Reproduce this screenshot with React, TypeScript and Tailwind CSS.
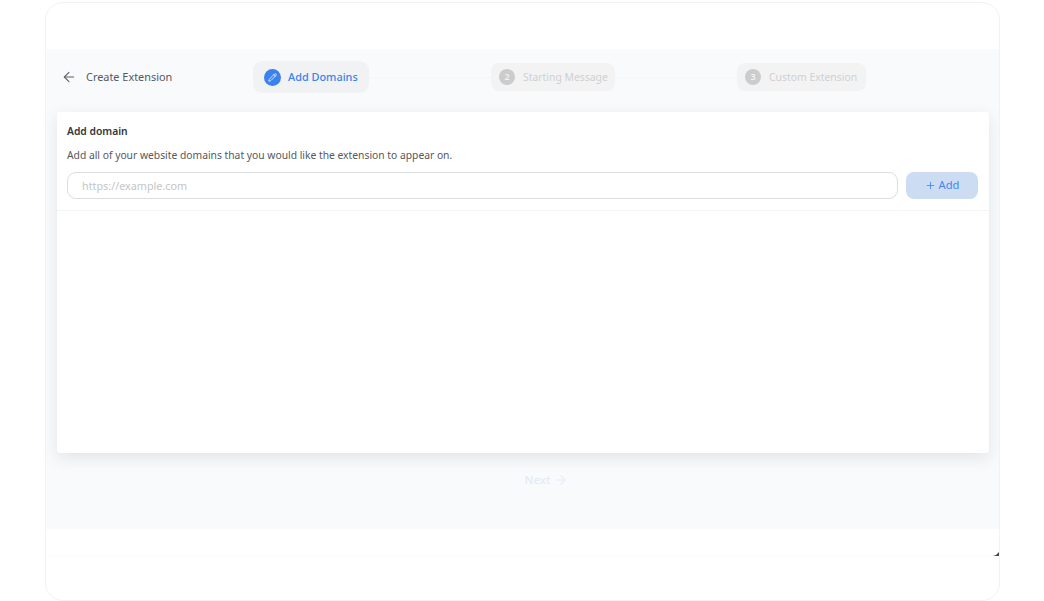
import React from 'react';
import { ArrowLeft, ArrowRight, Pencil, Plus } from 'lucide-react';

const font = { fontFamily: '"Noto Sans", sans-serif' };

const Step: React.FC<{ n: string; label: string; className: string }> = ({ n, label, className }) => (
  <div className={`flex h-[28px] shrink-0 items-center rounded-[8px] bg-[#f3f3f4] pl-[8px] ${className}`}>
    <span className="flex h-[16px] w-[16px] shrink-0 items-center justify-center rounded-full bg-[#cbccce] text-[9px] font-semibold text-[#f3f3f4]">
      {n}
    </span>
    <span className="ml-[8px] pt-[1px] whitespace-nowrap text-[10.4px] text-[#cfd0d2]">{label}</span>
  </div>
);

export default function App() {
  return (
    <div className="h-[601px] w-[1044px] overflow-hidden bg-white pt-[2px] pl-[45px]" style={font}>
      <div className="flex h-[599px] w-[955px] flex-col overflow-hidden rounded-[18px] border border-[#f2f2f3] bg-white">
        <div className="h-[46px] shrink-0" />

        <div className="flex h-[480px] shrink-0 flex-col bg-[#f9fafb]">
          <div className="flex h-[63px] shrink-0 items-center pb-[7px] pl-[15px]">
            <ArrowLeft className="h-[16px] w-[16px] shrink-0 text-[#5c6168]" strokeWidth={1.6} />
            <span className="ml-[9px] w-[167px] shrink-0 whitespace-nowrap text-[10.9px] text-[#55595f]">Create Extension</span>

            <div className="flex h-[32px] w-[116px] shrink-0 items-center rounded-[9px] bg-[#f1f2f3] pl-[11px]">
              <span className="flex h-[17px] w-[17px] shrink-0 items-center justify-center rounded-full bg-[#3b82ee]">
                <Pencil className="h-[9px] w-[9px] text-white" strokeWidth={2} />
              </span>
              <span className="ml-[7px] whitespace-nowrap text-[10.9px] font-medium text-[#3b82ee]">Add Domains</span>
            </div>

            <div className="w-[122px] shrink-0 border-t border-dashed border-[#f3f4f5]" />
            <Step n="2" label="Starting Message" className="w-[124px]" />
            <div className="w-[122px] shrink-0 border-t border-dashed border-[#f3f4f5]" />
            <Step n="3" label="Custom Extension" className="w-[129px]" />
          </div>

          <div className="ml-[11px] flex h-[341px] w-[932px] shrink-0 flex-col rounded-[3px] bg-white shadow-[0_5px_16px_rgba(30,40,60,0.1)]">
            <div className="flex h-[99px] shrink-0 flex-col border-b border-[#f3f4f5] px-[10px] pt-[11px]">
              <h3 className="text-[10.3px] leading-[16px] font-semibold text-[#33363a]">Add domain</h3>
              <p className="mt-[8px] text-[10.3px] leading-[16px] text-[#55585d]">
                Add all of your website domains that you would like the extension to appear on.
              </p>
              <div className="mt-[9px] flex gap-[8px]">
                <input
                  readOnly
                  placeholder="https://example.com"
                  className="h-[27px] w-[831px] rounded-[9px] border border-[#dcdddf] bg-white px-[14px] pb-[1px] text-[10.8px] outline-none placeholder:text-[#c3c5c8]"
                />
                <button className="flex h-[27px] w-[72px] items-center justify-center gap-[3px] rounded-[8px] bg-[#ccddf3] text-[11.2px] text-[#3f86ee]">
                  <Plus className="h-[11px] w-[11px]" strokeWidth={1.8} />
                  Add
                </button>
              </div>
            </div>
          </div>

          <div className="mt-[18px] flex items-center justify-center gap-[4px] pl-[48px] text-[11.5px] font-medium text-[#e3ebf7]">
            Next
            <ArrowRight className="h-[14px] w-[14px]" strokeWidth={1.8} />
          </div>
        </div>

        <div className="relative h-[27px] shrink-0 border-b border-[#fcfcfc]">
          <svg className="absolute right-0 bottom-[-1px] h-[4px] w-[6px]" viewBox="0 0 6 4">
            <path d="M0 4 L3 3 L6 0 L6 4 Z" fill="#3a4656" />
          </svg>
        </div>
      </div>
    </div>
  );
}
